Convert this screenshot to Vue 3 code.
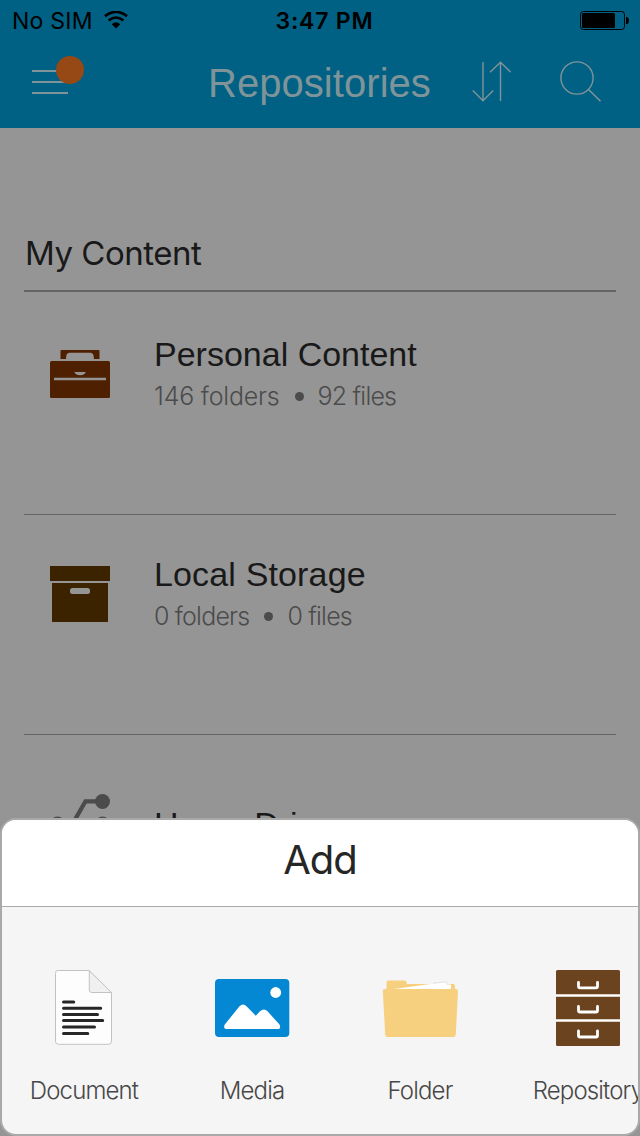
<template>
  <div class="screen">
    <!-- Status bar + navigation -->
    <header class="header">
      <div class="status-bar">
        <div class="carrier">
          <span class="carrier-name">No SIM</span>
          <svg class="wifi" width="24" height="18" viewBox="0 0 24 18">
            <path d="M1 5.1Q12-3.3 23 5.1" fill="none" stroke="#000" stroke-width="2.7" />
            <path d="M4.6 9.4Q12 3.6 19.4 9.4" fill="none" stroke="#000" stroke-width="2.6" />
            <path d="M7.7 13.2Q12 9.2 16.3 13.2L12 17.4Z" fill="#000" />
          </svg>
        </div>
        <span class="clock">3:47 PM</span>
        <svg class="battery" width="50" height="20" viewBox="0 0 50 20">
          <rect x=".5" y=".5" width="44" height="18" rx="3" fill="none" stroke="#000" />
          <rect x="2" y="2" width="33" height="15" rx="1.5" />
          <path d="M46 6h1.2Q49 7 49 9.5T47.2 13H46z" />
        </svg>
      </div>

      <nav class="nav">
        <button class="nav-btn menu-btn" aria-label="Menu">
          <svg width="54" height="42" viewBox="0 0 54 42">
            <path d="M0 15h36M0 26h36M0 37h36" stroke="#7f9498" stroke-width="2" />
            <circle cx="38" cy="14" r="14" fill="#964815" />
          </svg>
        </button>
        <h1 class="nav-title">Repositories</h1>
        <button class="nav-btn sort-btn" aria-label="Sort">
          <svg width="40" height="42" viewBox="0 0 40 42">
            <path
              d="M11 1v39M.8 29.5L11 39.8l10.2-10.3M28.5 40V1M18 11.2L28.5 1.2l10.2 10"
              fill="none"
              stroke="#7f9498"
              stroke-width="1.4"
            />
          </svg>
        </button>
        <button class="nav-btn" aria-label="Search">
          <svg width="42" height="42" viewBox="0 0 42 42">
            <circle cx="17" cy="17" r="16.1" fill="none" stroke="#7f9498" stroke-width="1.4" />
            <path d="M28.3 28.3L40.5 40.3" stroke="#7f9498" stroke-width="1.5" />
          </svg>
        </button>
      </nav>
    </header>

    <!-- Repository list -->
    <main class="content">
      <h2 class="section-title"><span>My Content</span></h2>

      <div v-for="repo in repositories" :key="repo.name" class="row">
        <svg v-if="repo.icon === 'briefcase'" class="row-icon" width="60" height="60" viewBox="0 0 60 60">
          <path d="M10.5 14V6q0-1 1-1h37q1 0 1 1v8h-5.6q0-6.2-3.3-6.2H19.2Q16 7.8 16 14z" fill="#4f2000" />
          <rect y="16" width="60" height="37" rx="1.5" fill="#4f2000" />
          <path d="M4 34h52" stroke="#959595" stroke-width="2.4" />
          <path d="M24.3 27h11.5q-1.5 3.3-5.7 3.3T24.3 27z" fill="#959595" />
        </svg>
        <svg v-else-if="repo.icon === 'box'" class="row-icon" width="60" height="60" viewBox="0 0 60 60">
          <path d="M0 1h60v15H0zM2 18h56v39H2z" fill="#3b2300" />
          <rect x="20" y="23" width="20" height="6" rx="2.5" fill="#959595" />
        </svg>
        <svg v-else class="row-icon" width="60" height="60" viewBox="0 0 60 60">
          <path d="M8 39h45M22.500 39L35.500 16.300H51M22.500 39L31 54h20" fill="none" stroke="#4b4b4b" stroke-width="4.3" />
          <circle cx="52.5" cy="16.5" r="7.5" fill="#4b4b4b" />
          <circle cx="7.5" cy="39" r="7.5" fill="#4b4b4b" />
          <circle cx="52.5" cy="39" r="7.5" fill="#4b4b4b" />
        </svg>

        <div class="row-text" :class="{ single: !repo.folders }">
          <h3 class="row-title" :class="repo.icon">{{ repo.name }}</h3>
          <p v-if="repo.folders" class="row-sub" :class="repo.icon">
            <span class="folders">{{ repo.folders }}</span>
            <i class="dot"></i>
            <span>{{ repo.files }}</span>
          </p>
        </div>
      </div>
    </main>

    <!-- Add sheet -->
    <section class="sheet">
      <h2 class="sheet-title"><span>Add</span></h2>
      <div class="actions">
        <button v-for="action in actions" :key="action" class="action">
          <svg v-if="action === 'Document'" class="action-icon" width="80" height="80" viewBox="1 0 80 80">
            <path d="M14.3 2.5H46L68.5 25v48q0 3.3-3 3.3h-50q-3 0-3-3V5.5q0-3 1.8-3z" fill="#fdfdfd" stroke="#c2c2c2" />
            <path d="M46.3 2.7V22q0 2.5 2.5 2.5h19.7z" fill="#f0f0f0" stroke="#c2c2c2" />
            <path
              d="M20.5 34h10.2M20.5 40.2h37.2M20.5 46.4h34M20.5 52.6h39.2M20.5 58.900h31M20.5 65.400h24.3"
              stroke="#272727"
              stroke-width="3"
              stroke-linecap="round"
            />
          </svg>
          <svg v-else-if="action === 'Media'" class="action-icon" width="80" height="80" viewBox="0 0 80 80">
            <rect x="3" y="11" width="74.3" height="58" rx="4" fill="#0588d3" />
            <circle cx="63.7" cy="24.5" r="5.4" fill="#fff" />
            <path
              d="M12.800 56.500L27.500 38.300Q31 34.600 34.500 38.200L43.800 47.800 48 43.300Q52 39.700 55.500 43.300L67.500 56.500Q69.200 61 66.500 61H14.500Q10.800 60.500 12.800 56.500z"
              fill="#fff"
            />
          </svg>
          <svg v-else-if="action === 'Folder'" class="action-icon" width="80" height="80" viewBox="0 0 80 80">
            <path d="M6.5 24V14.5q0-2 2-2h16.3q2 0 2 3.5H73q2 0 2 2v6z" fill="#f7d07f" />
            <path d="M14 21L67 13.8v2.7h4V24H14z" fill="#fff" />
            <path d="M53 15.3l13.7-1.6v2.5" fill="none" stroke="#d5d5d3" stroke-width=".7" />
            <path d="M5 21h70.5q2.5 0 2.5 2L75.8 66.5q-.2 2.5-2.6 2.5H7.8q-2.400 0-2.600-2.500L2.800 23Q2.800 21 5 21z" fill="#f7d07f" />
          </svg>
          <svg v-else class="action-icon" width="80" height="80" viewBox="0 0 80 80">
            <rect x="8" y="2" width="64" height="76" rx="1.5" fill="#6b431f" />
            <path d="M8 27.5h64M8 52.5h64" stroke="#fff" stroke-width="2.7" />
            <path
              d="M30.500 14.300v4q0 1.500 1.500 1.500h16q1.500 0 1.500-1.500v-4M30.500 38.500v4q0 1.500 1.500 1.500h16q1.500 0 1.500-1.500v-4M30.500 63v4.500q0 1.500 1.500 1.500h16q1.500 0 1.500-1.500V63"
              fill="none"
              stroke="#fff"
              stroke-width="2.8"
              stroke-linecap="round"
            />
          </svg>
          <span class="action-label">{{ action }}</span>
        </button>
      </div>
    </section>
  </div>
</template>

<script setup>
const repositories = [
  { name: 'Personal Content', icon: 'briefcase', folders: '146 folders', files: '92 files' },
  { name: 'Local Storage', icon: 'box', folders: '0 folders', files: '0 files' },
  { name: 'Home Drive', icon: 'share' }
]

const actions = ['Document', 'Media', 'Folder', 'Repository']
</script>

<style>
body {
  margin: 0;
  background: #959595;
}
</style>

<style scoped>
.screen,
.screen * {
  box-sizing: border-box;
}

.screen {
  position: relative;
  width: 640px;
  height: 1136px;
  overflow: hidden;
  background: #959595;
  color: #191919;
  font-family: "Liberation Sans", Arial, sans-serif;
}

h1, h2, h3, p {
  margin: 0;
  font-weight: 400;
}

button {
  border: none;
  padding: 0;
  background: transparent;
  font-family: inherit;
}

svg {
  display: block;
  flex: none;
}

/* header */
.header {
  height: 128px;
  background: #006185;
}

.status-bar {
  display: grid;
  grid-template-columns: 1fr auto 1fr;
  align-items: center;
  height: 40px;
  padding: 2px 10px 0 12px;
  color: #000;
  font-family: Inter, sans-serif;
  font-size: 23px;
}

.carrier {
  display: flex;
  align-items: center;
  gap: 11px;
}

.carrier-name {
  letter-spacing: 0.25px;
}

.wifi {
  margin-top: -2px;
}

.clock {
  padding-left: 7px;
  font-weight: 600;
  letter-spacing: 0.8px;
}

.battery {
  justify-self: end;
}

.nav {
  display: flex;
  align-items: flex-start;
  padding: 16px 38px 0 32px;
}

.menu-btn {
  width: 54px;
}

.nav-title {
  width: 224px;
  margin: 4px 0 0 122px;
  color: #7f9498;
  font-size: 40px;
  line-height: 46px;
  letter-spacing: 0.05px;
  white-space: nowrap;
}

.nav-btn {
  margin-top: 5px;
}

.nav-btn.menu-btn {
  margin-top: 0;
}

.nav-btn.sort-btn {
  margin: 5px 48px 0 40px;
}

/* list */
.content {
  padding: 0 24px;
}

.section-title {
  height: 164px;
  margin-bottom: 3px;
  padding: 104px 0 0 1px;
  border-bottom: 2px solid #646464;
  font-family: Inter, sans-serif;
  font-size: 33px;
  line-height: 42px;
  letter-spacing: -0.5px;
}

.row {
  display: flex;
  gap: 44px;
  height: 220px;
  padding: 39px 0 0 26px;
  border-bottom: 1px solid #646464;
}

.row-icon {
  margin-top: 11px;
}

.row-text.single {
  padding-top: 30px;
}

.row-title {
  font-size: 34px;
  line-height: 40px;
  white-space: nowrap;
}

.row-title.box {
  letter-spacing: 0.15px;
}

.row-sub {
  display: flex;
  align-items: center;
  margin-top: 4px;
  color: #4b4b4b;
  font-family: Inter, sans-serif;
  font-weight: 300;
  font-size: 25px;
  line-height: 36px;
  letter-spacing: -0.8px;
  white-space: nowrap;
}

.row-sub.briefcase .folders {
  letter-spacing: -0.2px;
}

.dot {
  width: 9px;
  height: 9px;
  margin: 0 14px 0 15px;
  border-radius: 50%;
  background: #4b4b4b;
}

/* sheet */
.sheet {
  position: absolute;
  left: 0;
  right: 0;
  bottom: 0;
  height: 318px;
  overflow: hidden;
  border: 2px solid #a9a9a9;
  border-radius: 16px;
  background: #f5f5f5;
}

.sheet-title {
  height: 87px;
  padding-top: 15px;
  border-bottom: 1px solid #a9a9a9;
  background: #fff;
  color: #262626;
  font-family: Inter, sans-serif;
  font-size: 40px;
  line-height: 50px;
  letter-spacing: -1px;
  text-align: center;
}

.actions {
  display: flex;
  width: 672px;
  padding-top: 61px;
  margin-left: -2px;
}

.action {
  display: flex;
  flex: none;
  flex-direction: column;
  align-items: center;
  width: 168px;
}

.action-label {
  margin-top: 27px;
  color: #474747;
  font-family: Inter, sans-serif;
  font-weight: 300;
  font-size: 24px;
  line-height: 32px;
  letter-spacing: -0.85px;
}
</style>
